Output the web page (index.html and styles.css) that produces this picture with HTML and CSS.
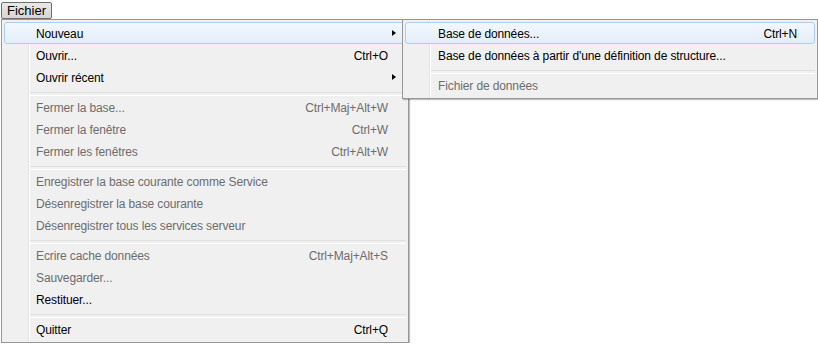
FILE: index.html
```html
<!DOCTYPE html>
<html lang="fr">
<head>
  <meta charset="UTF-8">
  <title>Fichier</title>
  <link rel="stylesheet" href="styles.css">
</head>
<body>
  <!-- Barre de menus -->
  <div class="menubar">
    <span class="menubar-item open">Fichier</span>
  </div>

  <!-- Menu Fichier -->
  <div class="menu main-menu">
    <div class="item hot"><span class="label">Nouveau</span><span class="arrow"></span></div>
    <div class="item"><span class="label">Ouvrir...</span><span class="shortcut">Ctrl+O</span></div>
    <div class="item"><span class="label">Ouvrir récent</span><span class="arrow"></span></div>
    <div class="sep"></div>
    <div class="item disabled"><span class="label">Fermer la base...</span><span class="shortcut">Ctrl+Maj+Alt+W</span></div>
    <div class="item disabled"><span class="label">Fermer la fenêtre</span><span class="shortcut">Ctrl+W</span></div>
    <div class="item disabled"><span class="label">Fermer les fenêtres</span><span class="shortcut">Ctrl+Alt+W</span></div>
    <div class="sep"></div>
    <div class="item disabled"><span class="label">Enregistrer la base courante comme Service</span></div>
    <div class="item disabled"><span class="label">Désenregistrer la base courante</span></div>
    <div class="item disabled"><span class="label">Désenregistrer tous les services serveur</span></div>
    <div class="sep"></div>
    <div class="item disabled"><span class="label">Ecrire cache données</span><span class="shortcut">Ctrl+Maj+Alt+S</span></div>
    <div class="item disabled"><span class="label">Sauvegarder...</span></div>
    <div class="item"><span class="label">Restituer...</span></div>
    <div class="sep"></div>
    <div class="item"><span class="label">Quitter</span><span class="shortcut">Ctrl+Q</span></div>

    <!-- Sous-menu Nouveau -->
    <div class="menu submenu">
      <div class="item hot"><span class="label">Base de données...</span><span class="shortcut">Ctrl+N</span></div>
      <div class="item"><span class="label">Base de données à partir d'une définition de structure...</span></div>
      <div class="sep"></div>
      <div class="item disabled"><span class="label">Fichier de données</span></div>
    </div>
  </div>
</body>
</html>
```

FILE: styles.css
```css
* {
  margin: 0;
  padding: 0;
  box-sizing: border-box;
}

body {
  font-family: "Liberation Sans", Arial, sans-serif;
  font-size: 12px;
  letter-spacing: -0.12px;
  color: #000;
  background: #fff;
}

.menubar {
  height: 19px;
  padding: 2px 0 0 1px;
  display: flex;
}

.menubar-item {
  display: flex;
  align-items: center;
  height: 17px;
  padding: 0 5px;
  font-size: 13px;
  letter-spacing: 0;
  border: 1px solid transparent;
  border-radius: 2px;
}

.menubar-item.open {
  border-color: #6f6f6f;
  background: linear-gradient(#e8e8e8, #d6d6d6);
}

/* Menus */
.menu {
  border: 1px solid #979797;
  padding: 2px;
  background:
    linear-gradient(to right, transparent 26px, #e2e3e3 26px, #e2e3e3 27px, #fff 27px, #fff 28px, transparent 28px),
    #f0f0f0;
  box-shadow: 1px 1px 1px rgba(0, 0, 0, 0.25);
}

.main-menu {
  position: relative;
  width: 408px;
  margin-left: 1px;
}

.submenu {
  position: absolute;
  left: 400px;
  top: -1px;
  width: 416px;
}

.item {
  display: flex;
  align-items: center;
  height: 22px;
  padding: 1px 0 0 31px;
  border: 1px solid transparent;
  border-radius: 3px;
  white-space: nowrap;
}

.item .label {
  flex: 1;
}

.item .shortcut {
  margin-right: 17px;
}

.item .arrow {
  width: 17px;
  height: 7px;
}

.item .arrow::before {
  content: "";
  display: block;
  margin-left: 4px;
  width: 0;
  height: 0;
  border-top: 3.5px solid transparent;
  border-bottom: 3.5px solid transparent;
  border-left: 4px solid #000;
}

.item.hot {
  border-color: #aecff2;
  background: linear-gradient(#f2f7fd, #e3edf9);
}

.submenu .item {
  padding-left: 32px;
}

.item.disabled {
  color: #6d6d6d;
}

.sep {
  height: 8px;
  margin-left: 26px;
  padding-top: 4px;
}

.sep::before {
  content: "";
  display: block;
  height: 2px;
  border-top: 1px solid #e0e0e0;
  border-bottom: 1px solid #fff;
}
```
